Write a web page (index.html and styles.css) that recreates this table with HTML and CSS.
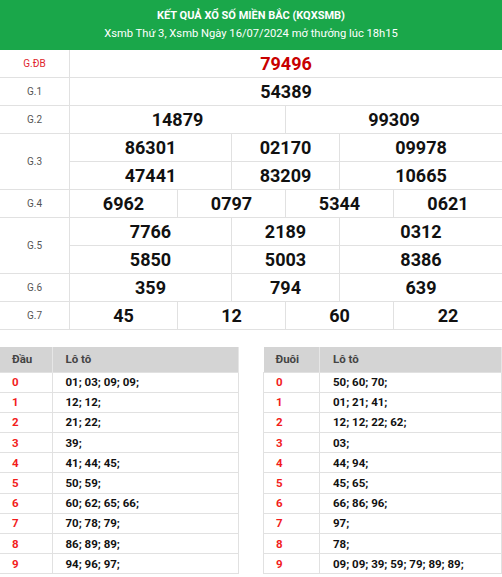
FILE: index.html
```html
<!DOCTYPE html>
<html lang="vi">
<head>
<meta charset="utf-8">
<link rel="stylesheet" href="styles.css">
</head>
<body>
<div class="page">
  <div class="header">
    <div class="title">KẾT QUẢ XỔ SỐ MIỀN BẮC (KQXSMB)</div>
    <div class="subtitle">Xsmb Thứ 3, Xsmb Ngày 16/07/2024 mở thưởng lúc 18h15</div>
  </div>
  <div class="results">
    <div class="label db">G.ĐB</div>
    <div class="nums"><div class="n s8 red e">79496</div></div>

    <div class="label">G.1</div>
    <div class="nums"><div class="n s8 e">54389</div></div>

    <div class="label">G.2</div>
    <div class="nums"><div class="n s4">14879</div><div class="n s4 e">99309</div></div>

    <div class="label tall">G.3</div>
    <div class="nums">
      <div class="n s3">86301</div><div class="n s2">02170</div><div class="n s3 e">09978</div>
      <div class="n s3">47441</div><div class="n s2">83209</div><div class="n s3 e">10665</div>
    </div>

    <div class="label">G.4</div>
    <div class="nums">
      <div class="n s2">6962</div><div class="n s2">0797</div><div class="n s2">5344</div><div class="n s2 e">0621</div>
    </div>

    <div class="label tall">G.5</div>
    <div class="nums">
      <div class="n s3">7766</div><div class="n s2">2189</div><div class="n s3 e">0312</div>
      <div class="n s3">5850</div><div class="n s2">5003</div><div class="n s3 e">8386</div>
    </div>

    <div class="label">G.6</div>
    <div class="nums">
      <div class="n s3">359</div><div class="n s2">794</div><div class="n s3 e">639</div>
    </div>

    <div class="label">G.7</div>
    <div class="nums">
      <div class="n s2">45</div><div class="n s2">12</div><div class="n s2">60</div><div class="n s2 e">22</div>
    </div>
  </div>

  <div class="loto">
    <table class="lt left">
      <thead><tr><th class="c1">Đầu</th><th>Lô tô</th></tr></thead>
      <tbody>
        <tr><td class="c1">0</td><td>01; 03; 09; 09;</td></tr>
        <tr><td class="c1">1</td><td>12; 12;</td></tr>
        <tr><td class="c1">2</td><td>21; 22;</td></tr>
        <tr><td class="c1">3</td><td>39;</td></tr>
        <tr><td class="c1">4</td><td>41; 44; 45;</td></tr>
        <tr><td class="c1">5</td><td>50; 59;</td></tr>
        <tr><td class="c1">6</td><td>60; 62; 65; 66;</td></tr>
        <tr><td class="c1">7</td><td>70; 78; 79;</td></tr>
        <tr><td class="c1">8</td><td>86; 89; 89;</td></tr>
        <tr><td class="c1">9</td><td>94; 96; 97;</td></tr>
      </tbody>
    </table>
    <table class="lt right">
      <thead><tr><th class="c1">Đuôi</th><th>Lô tô</th></tr></thead>
      <tbody>
        <tr><td class="c1">0</td><td>50; 60; 70;</td></tr>
        <tr><td class="c1">1</td><td>01; 21; 41;</td></tr>
        <tr><td class="c1">2</td><td>12; 12; 22; 62;</td></tr>
        <tr><td class="c1">3</td><td>03;</td></tr>
        <tr><td class="c1">4</td><td>44; 94;</td></tr>
        <tr><td class="c1">5</td><td>45; 65;</td></tr>
        <tr><td class="c1">6</td><td>66; 86; 96;</td></tr>
        <tr><td class="c1">7</td><td>97;</td></tr>
        <tr><td class="c1">8</td><td>78;</td></tr>
        <tr><td class="c1">9</td><td>09; 09; 39; 59; 79; 89; 89;</td></tr>
      </tbody>
    </table>
  </div>
</div>
</body>
</html>
```
FILE: styles.css
```css
* { box-sizing: border-box; }
html, body { margin: 0; padding: 0; background: #fff; }
body { font-family: Roboto, "Liberation Sans", Arial, sans-serif; color: #111; }
.page { width: 502px; }

.header {
  background: #1aa74a;
  color: #fff;
  text-align: center;
  height: 50px;
  padding-top: 9px;
}
.title { font-weight: 700; font-size: 11px; line-height: 14px; }
.subtitle { font-size: 11.2px; line-height: 16px; margin-top: 3px; }

.results {
  display: grid;
  grid-template-columns: 70px 432px;
}
.label {
  border-right: 1px solid #e1e1e1;
  border-bottom: 1px solid #e1e1e1;
  display: flex;
  align-items: center;
  justify-content: center;
  font-size: 10px;
  color: #555;
  height: 28px;
}
.label.tall { height: 56px; }
.label.db { color: #e0262e; }
.nums {
  display: grid;
  grid-template-columns: repeat(8, 54px);
}
.n {
  height: 28px;
  display: flex;
  align-items: center;
  justify-content: center;
  font-weight: 700;
  font-size: 18px;
  color: #111;
  border-right: 1px solid #e1e1e1;
  border-bottom: 1px solid #e1e1e1;
}
.n.e { border-right: none; }
.s8 { grid-column: span 8; }
.s4 { grid-column: span 4; }
.s3 { grid-column: span 3; }
.s2 { grid-column: span 2; }
.n.red { color: #c80000; }

.loto {
  display: grid;
  grid-template-columns: 239px 239px;
  column-gap: 24px;
  margin-top: 17px;
}
.lt {
  border-collapse: collapse;
  width: 100%;
  font-size: 11.5px;
}
.lt th {
  background: #d4d4d4;
  color: #444;
  font-weight: 700;
  text-align: left;
  height: 25px;
  padding: 0 0 0 13px;
  border-right: 1px solid #e6e6e6;
}
.lt td {
  height: 20.2px;
  padding: 0 0 0 13px;
  font-weight: 700;
  color: #111;
  border: 1px solid #e1e1e1;
}
.lt th.c1 { width: 52px; padding-left: 12px; }
.lt td.c1 { width: 52px; padding-left: 12px; color: #f21c1c; }
.lt.right th.c1, .lt.right td.c1 { width: 56px; }
.lt.left td:first-child { border-left: none; }
```
